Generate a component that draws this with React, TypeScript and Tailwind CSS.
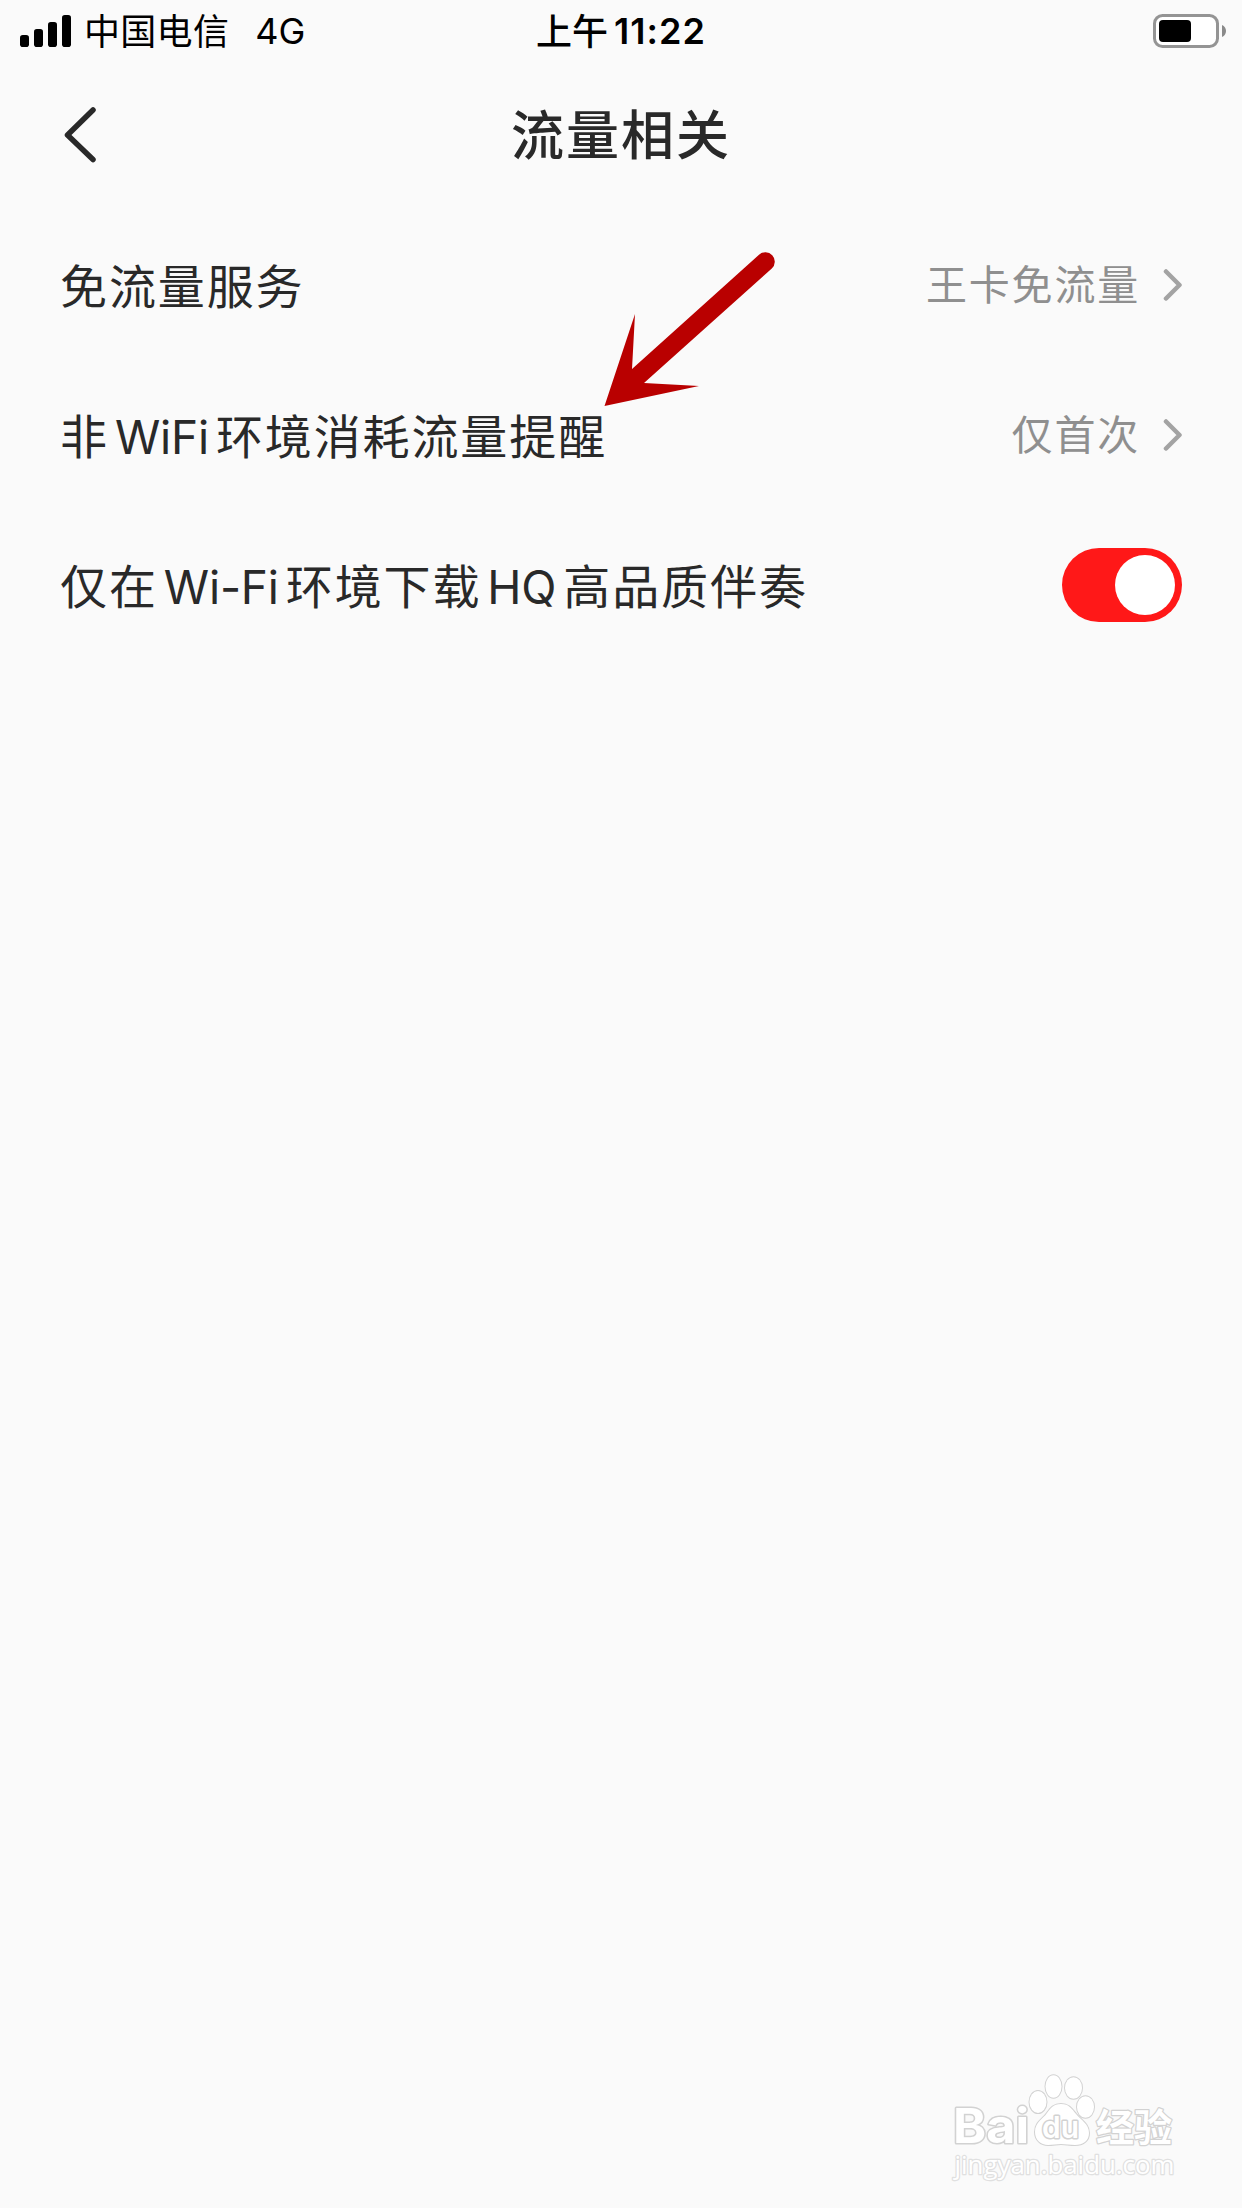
import React from "react";

function SignalBars() {
  return (
    <svg width="51" height="32" viewBox="0 0 51 32" className="block">
      <rect x="0" y="20" width="9" height="12" rx="2.8" />
      <rect x="14" y="14" width="9" height="18" rx="2.8" />
      <rect x="28" y="7" width="9" height="25" rx="2.8" />
      <rect x="42" y="0" width="9" height="32" rx="2.8" />
    </svg>
  );
}

function Battery() {
  return (
    <svg width="74" height="34" viewBox="0 0 74 34" className="block">
      <rect
        x="1.5"
        y="1.5"
        width="63"
        height="31"
        rx="8"
        fill="#fff"
        stroke="#949494"
        strokeWidth="3"
      />
      <rect x="6" y="6" width="32" height="22" rx="4" />
      <path d="M69 11c2.700 1.200 4 3.400 4 6s-1.300 4.800-4 6z" fill="#8a8a8a" />
    </svg>
  );
}

function StatusBar() {
  return (
    <div className="grid h-[60px] grid-cols-3 items-center text-black">
      <div className="flex items-center pl-5">
        <SignalBars />
        <span className="ml-[13px] pt-[2px] text-[36px] leading-[60px] tracking-[0.3px]">
          中国电信
        </span>
        <span className="ml-[26px] text-[36px] leading-[60px]">4G</span>
      </div>
      <div className="flex items-center justify-center gap-[6px] leading-[60px]">
        <span className="pt-[2px] text-[36px] font-medium">上午</span>
        <span className="text-[36px] font-semibold tracking-[1px]">
          11:22
        </span>
      </div>
      <div className="flex justify-end pr-[15px]">
        <Battery />
      </div>
    </div>
  );
}

function Header() {
  return (
    <header className="grid h-[150px] grid-cols-3 items-center pl-[62px] pr-[62px]">
      <svg
        width="38"
        height="58"
        viewBox="0 0 38 58"
        fill="none"
        stroke="#292929"
        strokeWidth="5.500"
        strokeLinecap="round"
        strokeLinejoin="round"
      >
        <path d="M31 4 5.500 29 31 53.500" />
      </svg>
      <h1 className="whitespace-nowrap pt-[3px] text-center text-[53px] font-medium tracking-[2px]">
        流量相关
      </h1>
    </header>
  );
}

function Row({
  label,
  children,
}: {
  label: React.ReactNode;
  children: React.ReactNode;
}) {
  return (
    <div className="flex h-[150px] items-center justify-between pl-[60px] pr-[60px]">
      <p className="flex items-baseline whitespace-nowrap pt-[4px] text-[47px] tracking-[1.9px]">
        {label}
      </p>
      {children}
    </div>
  );
}

function RowValue({ text }: { text: string }) {
  return (
    <div className="flex items-center text-[41px] tracking-[1.8px] text-[#8f8f8f]">
      <span className="pt-px">{text}</span>
      <svg
        width="19"
        height="34"
        viewBox="0 0 19 34"
        fill="none"
        stroke="#a3a3a3"
        strokeWidth="4.500"
        strokeLinecap="round"
        strokeLinejoin="round"
        className="ml-[23px]"
      >
        <path d="M3 3.500 16.500 17 3 30.500" />
      </svg>
    </div>
  );
}

function Toggle() {
  const [on, setOn] = React.useState<boolean>(true);

  return (
    <button
      role="switch"
      aria-checked={on}
      onClick={() => setOn(!on)}
      className={`flex h-[74px] w-[120px] items-center rounded-full px-[7px] ${
        on ? "justify-end bg-[#ff1818]" : "justify-start bg-[#d4d4d4]"
      }`}
    >
      <span className="h-[60px] w-[60px] rounded-full bg-white" />
    </button>
  );
}

function Arrow() {
  return (
    <svg
      width="180"
      height="160"
      viewBox="600 250 180 160"
      className="pointer-events-none absolute left-[600px] top-[250px]"
      fill="#b90000"
    >
      <path d="M604.500 406 635 314 632 369 759 254.800A9.300 9.300 0 0 1 771.800 268.500L644 383 699 386z" />
    </svg>
  );
}

function Watermark() {
  return (
    <svg
      width="270"
      height="158"
      viewBox="0 0 270 158"
      className="pointer-events-none absolute bottom-0 right-[42px]"
      fill="#fff"
      stroke="#d2d2d2"
      strokeWidth="2"
      paintOrder="stroke"
      strokeLinejoin="round"
    >
      <text
        x="23"
        y="93"
        fontSize="48"
        fontWeight="700"
        textLength="76"
        lengthAdjust="spacingAndGlyphs"
        strokeWidth="3"
      >
        Bai
      </text>
      <ellipse cx="108" cy="52" rx="8.500" ry="11" />
      <ellipse cx="123.500" cy="36.500" rx="8" ry="11.300" />
      <ellipse cx="143.500" cy="38" rx="8.500" ry="10.800" />
      <ellipse cx="155.500" cy="57" rx="8.500" ry="10.800" />
      <path d="M131 54c-8 0-11 5-14 9-4 6-12 9-12 19 0 8 6 13 13 13 5 0 9-1 13-1s9 1 14 1c8 0 14-4 14-12 0-9-8-13-13-19-4-5-7-10-15-10z" />
      <text
        x="112"
        y="88"
        fontSize="30"
        fontWeight="600"
        textLength="37"
        lengthAdjust="spacingAndGlyphs"
        strokeWidth="3"
      >
        du
      </text>
      <text
        x="166"
        y="91"
        fontSize="38"
        fontWeight="700"
        textLength="76"
        strokeWidth="2.500"
      >
        经验
      </text>
      <text
        x="24.500"
        y="123.500"
        fontSize="26"
        textLength="220"
        lengthAdjust="spacingAndGlyphs"
        strokeWidth="2.500"
        className="font-['Open_Sans',sans-serif]"
        stroke="#e0e0e0"
      >
        jingyan.baidu.com
      </text>
    </svg>
  );
}

function Latin({ text }: { text: string }) {
  return (
    <span className="ml-[6px] mr-[7px] text-[46px] tracking-[-0.2px]">
      {text}
    </span>
  );
}

export default function App() {
  return (
    <div
      lang="zh-CN"
      className="relative h-[2208px] w-[1242px] overflow-hidden bg-[#fafafa] font-[Inter,'Noto_Sans_CJK_SC',sans-serif] text-[#292929]"
    >
      <StatusBar />
      <Header />
      <main>
        <Row label="免流量服务">
          <RowValue text="王卡免流量" />
        </Row>
        <Row
          label={
            <>
              非<Latin text="WiFi" />
              环境消耗流量提醒
            </>
          }
        >
          <RowValue text="仅首次" />
        </Row>
        <Row
          label={
            <>
              仅在
              <Latin text="Wi-Fi" />
              环境下载
              <Latin text="HQ" />
              高品质伴奏
            </>
          }
        >
          <Toggle />
        </Row>
      </main>
      <Arrow />
      <Watermark />
    </div>
  );
}
